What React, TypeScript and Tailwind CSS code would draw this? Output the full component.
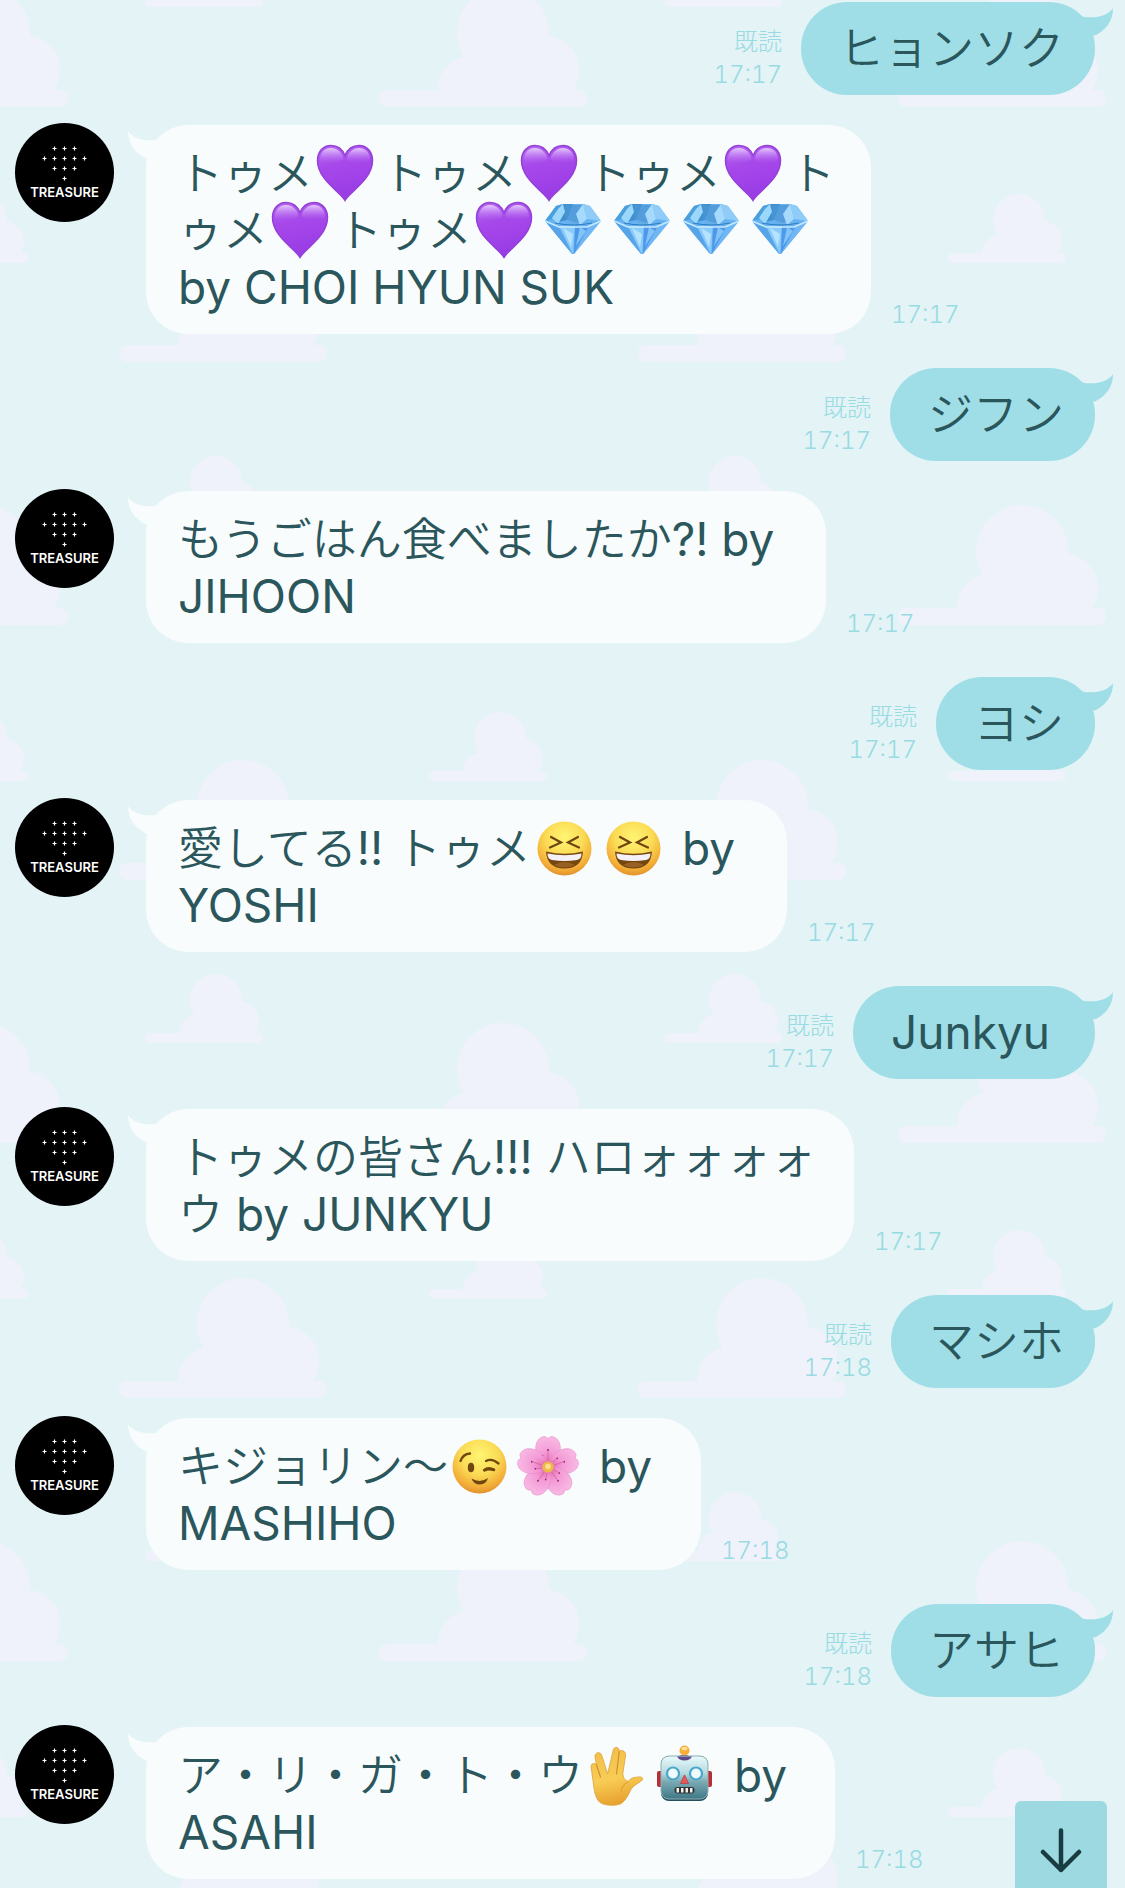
import { Fragment, type ReactNode } from "react";

type EmojiName = "heart" | "diamond" | "laugh" | "wink" | "flower" | "hand" | "robot";
type Part = string | { emoji: EmojiName };
type Message =
  | { from: "me"; time: string; text: string; bubble: string }
  | { from: "bot"; time: string; lines: Part[][]; bubble: string };

const e = (emoji: EmojiName): Part => ({ emoji });

const messages: Message[] = [
  { from: "me", time: "17:17", text: "ヒョンソク", bubble: "pr-[31px]" },
  {
    from: "bot",
    time: "17:17",
    bubble: "w-[725px]",
    lines: [
      ["トゥメ", e("heart"), "トゥメ", e("heart"), "トゥメ", e("heart"), "ト"],
      ["ゥメ", e("heart"), "トゥメ", e("heart"), e("diamond"), e("diamond"), e("diamond"), e("diamond")],
      ["by CHOI HYUN SUK"],
    ],
  },
  { from: "me", time: "17:17", text: "ジフン", bubble: "pr-[31px]" },
  {
    from: "bot",
    time: "17:17",
    bubble: "w-[680px]",
    lines: [["もうごはん食べましたか?! by"], ["JIHOON"]],
  },
  { from: "me", time: "17:17", text: "ヨシ", bubble: "pr-[31px]" },
  {
    from: "bot",
    time: "17:17",
    bubble: "w-[641px]",
    lines: [["愛してる!! トゥメ", e("laugh"), e("laugh"), " by"], ["YOSHI"]],
  },
  { from: "me", time: "17:17", text: "Junkyu", bubble: "pr-[45px]" },
  {
    from: "bot",
    time: "17:17",
    bubble: "w-[708px]",
    lines: [["トゥメの皆さん!!! ハロォォォォ"], ["ウ by JUNKYU"]],
  },
  { from: "me", time: "17:18", text: "マシホ", bubble: "pr-[31px]" },
  {
    from: "bot",
    time: "17:18",
    bubble: "w-[555px]",
    lines: [["キジョリン〜", e("wink"), e("flower"), " by"], ["MASHIHO"]],
  },
  { from: "me", time: "17:18", text: "アサヒ", bubble: "pr-[31px]" },
  {
    from: "bot",
    time: "17:18",
    bubble: "w-[689px]",
    lines: [["ア・リ・ガ・ト・ウ", e("hand"), e("robot"), " by"], ["ASAHI"]],
  },
];

function Defs() {
  return (
    <svg className="absolute size-0" aria-hidden="true">
      <defs>
        <linearGradient id="heartFill" x1="0" y1="0" x2="0.25" y2="1">
          <stop offset="0" stopColor="#b86df0" />
          <stop offset="0.4" stopColor="#a648ea" />
          <stop offset="1" stopColor="#9a3ce6" />
        </linearGradient>
        <linearGradient id="heartShine" x1="0" y1="0" x2="0" y2="1">
          <stop offset="0" stopColor="#f0dcff" stopOpacity="0.85" />
          <stop offset="1" stopColor="#b66bf2" stopOpacity="0" />
        </linearGradient>
        <radialGradient id="face" cx="0.5" cy="0.3" r="0.7">
          <stop offset="0" stopColor="#fff573" />
          <stop offset="0.5" stopColor="#fbdb55" />
          <stop offset="0.85" stopColor="#f2ac36" />
          <stop offset="1" stopColor="#e2922f" />
        </radialGradient>
        <radialGradient id="petal" cx="0.5" cy="0.85" r="0.85">
          <stop offset="0" stopColor="#e96fb4" />
          <stop offset="0.4" stopColor="#f49ad6" />
          <stop offset="1" stopColor="#f8b9e4" />
        </radialGradient>
        <linearGradient id="skin" x1="0" y1="0" x2="0.2" y2="1">
          <stop offset="0" stopColor="#f0bd48" />
          <stop offset="0.6" stopColor="#f8cd55" />
          <stop offset="1" stopColor="#e9a432" />
        </linearGradient>
        <linearGradient id="metal" x1="0" y1="0" x2="0" y2="1">
          <stop offset="0" stopColor="#e8fbfc" />
          <stop offset="0.4" stopColor="#b5d9de" />
          <stop offset="0.6" stopColor="#7aa9b3" />
          <stop offset="1" stopColor="#3f7886" />
        </linearGradient>
      </defs>
    </svg>
  );
}

const heartPath =
  "M30 57.500C25.500 49 2.500 36.500 2.500 17.500C2.500 8.500 8.500 2.500 16 2.500C22.500 2.500 27.500 6.500 30 12.500C32.500 6.500 37.500 2.500 44 2.500C51.500 2.500 57.500 8.500 57.500 17.500C57.500 36.500 34.500 49 30 57.500Z";

const drawings: Record<EmojiName, { label: string; art: ReactNode }> = {
  heart: {
    label: "紫のハート",
    art: (
      <>
        <path d={heartPath} fill="url(#heartFill)" stroke="#9440d6" strokeWidth="1.500" />
        <path d="M5 17C5 9 10 5 16 5C22 5 27 9 28.500 16C24 22 8 22 5 17Z" fill="url(#heartShine)" />
        <path d="M55 17C55 9 50 5 44 5C38 5 33 9 31.500 16C36 22 52 22 55 17Z" fill="url(#heartShine)" />
      </>
    ),
  },
  diamond: {
    label: "ダイヤモンド",
    art: (
      <>
        <path d="M13 6L20 4H40L47 6L58 21L31 54H29L2 21Z" fill="#67b2f2" />
        <path d="M13 6L20 4L15 18L2 21Z" fill="#4aa0dd" />
        <path d="M20 4H30L24 20L15 22Z" fill="#3f8fce" />
        <path d="M20 4L15 9L9 18L15 24L22 12Z" fill="#9bd7fb" />
        <path d="M30 5H40L42 21L31 27L24 22Z" fill="#66aee9" />
        <path d="M22 5H39L40 16L34 23L22 19Z" fill="#4b95d6" opacity="0.7" />
        <path d="M40 4L47 6L58 21L44 19Z" fill="#8fccf8" />
        <path d="M40 4L44 19L37 25L33 14Z" fill="#a6dafc" />
        <path d="M2 21L16 26L29 54Z" fill="#58a4e9" />
        <path d="M16 26H32L30 54L24 42Z" fill="#8bcbfb" />
        <path d="M32 26L46 26L31 54Z" fill="#4d98ea" />
        <path d="M46 26L58 21L31 54Z" fill="#71b6f5" />
        <path d="M20 28L30 34L28 47Z" fill="#b5e2fd" />
        <path d="M37 27L43 31L33 46Z" fill="#82c3f8" />
        <path d="M2 21L16 27H44L58 21" fill="none" stroke="#c6ebfd" strokeWidth="1.500" />
        <path d="M12 23Q30 27 49 23" fill="none" stroke="#2d7dc0" strokeWidth="1" />
      </>
    ),
  },
  laugh: {
    label: "大笑い",
    art: (
      <g transform="translate(2 0)">
        <circle cx="29.500" cy="30.500" r="27" fill="url(#face)" />
        <path d="M16 19L26 24.500L15 29.500M43 19L33 24.500L44 29.500" fill="none" stroke="#6f4512" strokeWidth="2.200" strokeLinecap="round" />
        <path d="M11 33.500Q29.500 38 48 33.500Q47 50.500 29.500 50.500Q12 50.500 11 33.500Z" fill="#76460f" />
        <path d="M12.500 35.500Q29.500 39 46.500 35.500Q46.500 41 42 42Q29.500 44 17 42Q12.500 41 12.500 35.500Z" fill="#f4f2f8" />
        <path d="M19 47Q29.500 41 40 47Q29.500 52 19 47Z" fill="#986022" />
      </g>
    ),
  },
  wink: {
    label: "ウィンク",
    art: (
      <>
        <circle cx="29.500" cy="30.500" r="27" fill="url(#face)" />
        <ellipse cx="21" cy="31.500" rx="3.200" ry="4.800" fill="#70480f" />
        <path d="M10.500 25Q13 18 20 17.500M36 25Q42 22 48.500 27.500M34 34Q38 30.500 44 33.500" fill="none" stroke="#70480f" strokeWidth="2.300" strokeLinecap="round" />
        <path d="M34.500 34.500Q38 32.500 44 34" fill="none" stroke="#70480f" strokeWidth="2.500" strokeLinecap="round" />
        <path d="M21.500 42.500Q30 47.500 38 42Q36 48.500 30 48.500Q23.500 48.500 21.500 42.500Z" fill="#70480f" />
      </>
    ),
  },
  flower: {
    label: "桜",
    art: (
      <>
        {[0, 72, 144, 216, 288].map((angle) => (
          <g key={angle} transform={`rotate(${angle} 29 31)`}>
            <path
              d="M29 31C22 27 15 18 17 9C18 3.500 22 0.500 26 0.500L29 2.500L32 0.500C36 0.500 40 3.500 41 9C43 18 36 27 29 31Z"
              fill="url(#petal)"
              stroke="#ea8cc8"
              strokeWidth="0.600"
            />
            <path d="M29 29V15M28 29L23.500 20" stroke="#cf5a98" strokeWidth="0.600" />
            <circle cx="29" cy="14" r="0.900" fill="#8b2358" />
            <circle cx="23.500" cy="19.500" r="0.800" fill="#8b2358" />
          </g>
        ))}
        <circle cx="29" cy="31" r="7" fill="#e27cae" />
        <circle cx="29" cy="31" r="5.600" fill="#f0b64c" />
        <circle cx="29" cy="30.500" r="2.800" fill="#fbe28a" />
      </>
    ),
  },
  hand: {
    label: "バルカンサリュート",
    art: (
      <g transform="translate(3 1)">
        <path
          d="M3 20.500C3 17 7 16.500 8.500 19L7 11C6.500 6 12.500 5 13.800 9.500L19.600 28L25 5C25.500 0 31.500 0 31.200 5.500C32.500 3.500 38 4.500 37.600 9L34.800 28C35.500 33 38 35.500 40.500 35C42.500 33 44 31.500 47 31.500C51 30.500 54.800 30.500 54.600 33C54 36 48.500 37 44 42C41 46 40 52 34 57C30 60 17 60.500 11.500 56C7.500 52.500 6 44 5.500 38Z"
          fill="url(#skin)"
          stroke="#dfa03a"
          strokeWidth="0.800"
        />
        <path d="M8.500 19L12.500 31M31.200 5.500L28.500 28" fill="none" stroke="#cf9030" strokeWidth="1.200" strokeLinecap="round" />
        <path d="M40 36Q34 39 33 46" fill="none" stroke="#e0a43a" strokeWidth="1.200" strokeLinecap="round" />
      </g>
    ),
  },
  robot: {
    label: "ロボット",
    art: (
      <g transform="translate(3 0)">
        <rect x="0" y="26" width="6" height="16" rx="2" fill="#b52f36" />
        <rect x="49" y="26" width="6" height="16" rx="2" fill="#b52f36" />
        <path d="M20 12Q27 7 34 12V14H20Z" fill="#5c4a86" />
        <circle cx="27.500" cy="5.500" r="5" fill="#f8ad36" />
        <ellipse cx="27.500" cy="3.500" rx="3" ry="1.800" fill="#fde29a" />
        <rect x="4" y="11" width="47" height="45" rx="8" fill="#23505c" />
        <rect x="4" y="11" width="47" height="43" rx="8" fill="url(#metal)" stroke="#91aeb3" strokeWidth="1" />
        <path d="M20 11.500H35Q33 15.500 27.500 15.500Q22 15.500 20 11.500Z" fill="#5c4a86" />
        <circle cx="16" cy="28.500" r="6" fill="#eefcff" stroke="#4aa6cc" strokeWidth="2.200" />
        <circle cx="39" cy="28.500" r="6" fill="#eefcff" stroke="#4aa6cc" strokeWidth="2.200" />
        <path d="M27.500 30L31.500 38.500H23.500Z" fill="#e35a5c" stroke="#b93c44" strokeWidth="0.800" />
        <rect x="17.500" y="42" width="20" height="6.500" rx="3" fill="#2e3438" />
        <path d="M19.500 43H22V47.500H19.500ZM24 43H26.500V47.500H24ZM28.500 43H31V47.500H28.500ZM33 43H35.500V47.500H33Z" fill="#f5f2ea" />
      </g>
    ),
  },
};

function Emoji({ name }: { name: EmojiName }) {
  const { label, art } = drawings[name];
  return (
    <svg
      role="img"
      aria-label={label}
      viewBox="0 0 60 60"
      className="-my-0.5 mr-[7px] ml-0.5 inline-block size-[60px] overflow-visible align-top"
    >
      {art}
    </svg>
  );
}

/* Kana and kanji are set lighter than the Latin letters beside them. */
function MixedText({ text }: { text: string }) {
  return (
    <>
      {text.split(/([\u3000-\u9fff]+)/).map((run, i) =>
        i % 2 === 1 ? (
          <span key={i} className="font-['Noto_Sans_CJK_JP',sans-serif] text-[45px] leading-none font-[350]">
            {run}
          </span>
        ) : (
          <Fragment key={i}>{run}</Fragment>
        ),
      )}
    </>
  );
}

function Tail({ className }: { className: string }) {
  return (
    <svg viewBox="0 0 40 40" className={`absolute size-10 ${className}`} aria-hidden="true">
      <path d="M7 14.500C20 17 33 14 38 6C38 19 31 28 20 33.500L4 30Z" fill="currentColor" />
    </svg>
  );
}

function Avatar() {
  const stars = [
    [39, 25], [49, 25], [59, 25],
    [29, 35], [39, 35], [49, 35], [59, 35], [69, 35],
    [39, 45], [49, 45], [59, 45],
    [49, 55],
  ];
  return (
    <div className="relative flex size-[99px] shrink-0 flex-col items-center overflow-hidden rounded-full bg-black pt-[62px]">
      <svg viewBox="0 0 99 99" className="absolute inset-0 size-full" aria-hidden="true">
        {stars.map(([x, y]) => (
          <path
            key={`${x}-${y}`}
            d={`M${x + 0.5} ${y - 1.5}v4M${x - 1.5} ${y + 0.5}h4`}
            stroke="#fff"
            strokeWidth="1.200"
          />
        ))}
      </svg>
      <span className="text-[13px] leading-[14px] font-semibold text-white">TREASURE</span>
    </div>
  );
}

function Clouds() {
  return (
    <svg className="absolute inset-0 -z-10 size-full" aria-hidden="true">
      <defs>
        <g id="bigCloud">
          <rect y="104" width="208" height="17" rx="8" />
          <circle cx="124" cy="47" r="46" />
          <circle cx="165" cy="84" r="35" />
          <circle cx="92" cy="103" r="33" />
          <rect x="60" y="90" width="130" height="24" rx="10" />
        </g>
        <g id="smallCloud">
          <rect y="60" width="118" height="10" rx="5" />
          <circle cx="71" cy="27" r="26" />
          <circle cx="94" cy="48" r="20" />
          <circle cx="54" cy="61" r="20" />
          <rect x="36" y="52" width="71" height="14" rx="6" />
        </g>
        <clipPath id="bigClip"><rect width="208" height="121" /></clipPath>
        <clipPath id="smallClip"><rect width="118" height="70" /></clipPath>
        <pattern id="sky" width="519" height="518" patternUnits="userSpaceOnUse">
          <g fill="#f0f2fb">
            {[[119, 241], [379, -14], [379, 504], [-140, -14], [-140, 504]].map(([x, y]) => (
              <g key={`b${x},${y}`} transform={`translate(${x} ${y})`}>
                <use href="#bigCloud" clipPath="url(#bigClip)" />
              </g>
            ))}
            {[[429, 193], [-90, 193], [145, 455], [145, -63]].map(([x, y]) => (
              <g key={`s${x},${y}`} transform={`translate(${x} ${y})`}>
                <use href="#smallCloud" clipPath="url(#smallClip)" />
              </g>
            ))}
          </g>
        </pattern>
      </defs>
      <rect width="100%" height="100%" fill="url(#sky)" />
    </svg>
  );
}

export default function App() {
  return (
    <main className="relative isolate min-h-screen overflow-hidden bg-[#e3f3f6] font-['Inter','Noto_Sans_CJK_JP',sans-serif] text-[#2a565c]">
      <Defs />
      <Clouds />
      <ol className="flex flex-col pt-0.5">
        {messages.map((m, i) =>
          m.from === "me" ? (
            <li key={i} className="mb-7 flex items-end justify-end pr-[30px]">
              <div className="mr-[19px] pb-1 text-right text-[24px] leading-[33px] font-light text-[#98dbe2] tabular-nums">
                <p>既読</p>
                <time>{m.time}</time>
              </div>
              <div className={`relative rounded-[46px] bg-[#9fdee6] pt-[18px] pb-[18px] pl-[38px] ${m.bubble}`}>
                <Tail className="top-0 -right-5 text-[#9fdee6]" />
                <p className="relative text-[46px] leading-[57px] font-[380] whitespace-nowrap">
                  <MixedText text={m.text} />
                </p>
              </div>
            </li>
          ) : (
            <li key={i} className="mb-[34px] flex items-start pl-[15px] last:mb-0">
              <Avatar />
              <div className={`relative mt-0.5 ml-8 rounded-[42px] bg-[#f8fcfc] pt-5 pb-[18px] pl-8 ${m.bubble}`}>
                <Tail className="top-0 -left-5 -scale-x-100 text-[#f8fcfc]" />
                <div className="relative text-[46px] leading-[57px] font-[380]">
                  {m.lines.map((line, j) => (
                    <p key={j} className="whitespace-pre">
                      {line.map((part, k) =>
                        typeof part === "string" ? (
                          <MixedText key={k} text={part} />
                        ) : (
                          <Emoji key={k} name={part.emoji} />
                        ),
                      )}
                    </p>
                  ))}
                </div>
              </div>
              <time className="ml-5 self-end pb-[3px] text-[24px] leading-[33px] font-light text-[#98dbe2] tabular-nums">{m.time}</time>
            </li>
          ),
        )}
      </ol>
      <button
        type="button"
        aria-label="最新のメッセージへ"
        className="fixed right-[18px] bottom-0 flex h-[87px] w-[92px] justify-center rounded-t-md bg-[#9cd9e0] pt-[26px] text-[#183c42]"
      >
        <svg viewBox="0 0 42 46" className="h-[46px] w-[42px]" fill="none" stroke="currentColor" strokeWidth="4.500" strokeLinecap="round" strokeLinejoin="round" aria-hidden="true">
          <path d="M21 3.500V43M3 25L21 43L39 25" />
        </svg>
      </button>
    </main>
  );
}
